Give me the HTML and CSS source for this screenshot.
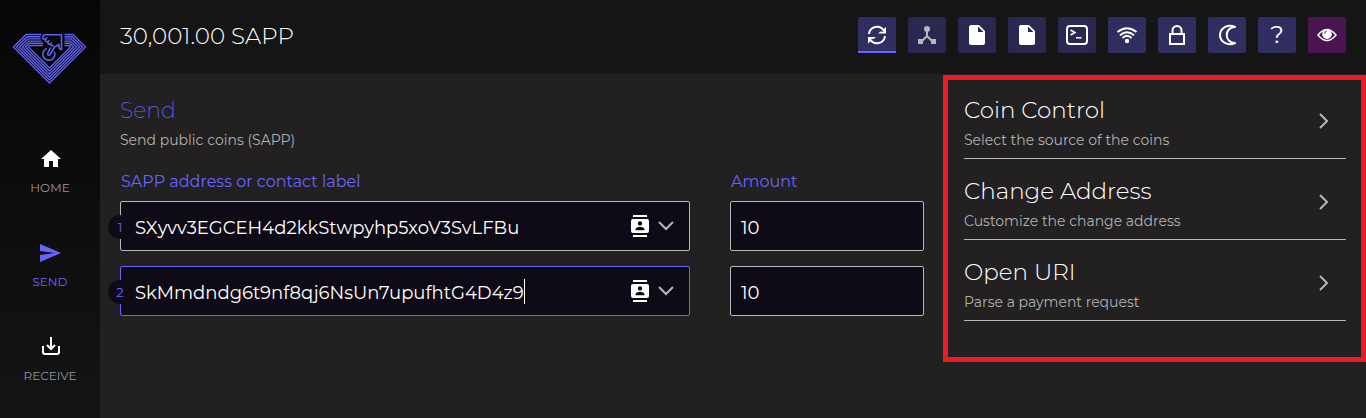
FILE: index.html
```html
<!DOCTYPE html>
<html lang="en">
<head>
<meta charset="utf-8">
<title>SAPP Wallet - Send</title>
<link rel="stylesheet" href="styles.css">
</head>
<body>
<svg class="defs" aria-hidden="true">
  <symbol id="file" viewBox="0 0 38 36"><path transform="translate(7 6)" fill="currentColor" d="M6 2c-1.1 0-2 .9-2 2v16c0 1.1.9 2 2 2h12c1.1 0 2-.9 2-2V8l-6-6H6zm7 7V3.500L18.500 9H13z"/></symbol>
  <symbol id="contacts" viewBox="0 0 18 22"><path fill="currentColor" fill-rule="evenodd" d="M2 0h14v2H2zM2 20h14v2H2zM2 4h14a2 2 0 0 1 2 2v10a2 2 0 0 1-2 2H2a2 2 0 0 1-2-2V6a2 2 0 0 1 2-2zM9 6.200a2.200 2.200 0 1 0 0 4.400 2.200 2.200 0 0 0 0-4.400zM4.500 15.200h9v-.8c0-1.700-2.500-2.600-4.500-2.600s-4.500.9-4.500 2.600z"/></symbol>
  <symbol id="down" viewBox="0 0 16 10"><path fill="none" stroke="currentColor" stroke-width="2" d="M1 1l7 7 7-7"/></symbol>
  <symbol id="right" viewBox="0 0 10 16"><path fill="none" stroke="currentColor" stroke-width="2" d="M1 1l7 7-7 7"/></symbol>
</svg>
<div class="app">
  <nav class="sidebar">
    <svg class="logo" viewBox="12 33 76 52" role="img" aria-label="Sapphire">
      <g class="logo-lines">
        <path d="M41.500 34.500H26L13.500 47 49.500 83 85.500 47 73 34.500h-8.500"/>
        <path d="M40.500 36.700H27L16.500 47l33 33 33-33L72 36.700h-7.500"/>
        <path d="M40.500 38.900H28L19.500 47l30 30 30-30-8.500-8.100h-6.500"/>
        <path d="M41.500 41.100H29L22.500 47l27 27 27-27-6.500-5.900h-5.500"/>
        <path d="M43 43.300H29.500l-4 3.700 24 24 24-24-4-3.700h-5"/>
        <path d="M43 45.500H30L28.500 47l21 21 21-21-1.500-1.500h-4.500"/>
      </g>
      <g class="logo-hand">
        <path d="M44 34.700h17.500V49.500c-2 .3-2.700-1.500-2.700-5-1.500.2-2.300 2-4.300 2.500l-4.300 7.500c-1 1.500-3 .5-2.600-1l3-6"/>
        <path d="M44.500 34.700c-2.500 1.500-2.500 4-.5 4.600 1 .2 1.300-.5 2-.8-1.500 2.500 0 4 2.500 2.700-1.500 2.500.3 4 2.500 2.500-.5 2 1 2.800 2.800 1.300"/>
        <path d="M47 48.500a6 6 0 1 0 7.200 3"/>
      </g>
    </svg>
    <a class="nav-item" href="#home"><svg viewBox="0 0 24 24"><path fill="currentColor" d="M11 20v-6h4v6h5v-8h3L13 3 3 12h3v8z"/></svg><span>HOME</span></a>
    <a class="nav-item active" href="#send"><svg viewBox="0 0 24 24"><path fill="currentColor" d="M2 21l21-9L2 3v7l15 2-15 2z"/></svg><span>SEND</span></a>
    <a class="nav-item" href="#receive"><svg viewBox="0 0 24 24"><path fill="none" stroke="currentColor" stroke-width="2" d="M5 11v6q0 2 2 2h12q2 0 2-2v-6M13 2v12M9 10l4 4 4-4"/></svg><span>RECEIVE</span></a>
  </nav>
  <div class="page">
    <header class="topbar">
      <div class="balance">30,001.00 SAPP</div>
      <div class="tools">
        <button class="tool sync" aria-label="Synchronize"><svg viewBox="0 0 38 36"><path fill="none" stroke="currentColor" stroke-width="2" d="M11 17a8 8 0 0 1 15-3M27 19a8 8 0 0 1-15 3"/><path fill="currentColor" d="M28 10v6.500h-8l2.500-2 3 .3 .5-3zM10 26.500V20h8l-2.500 2-3-.3-.5 3z"/></svg></button>
        <button class="tool muted" aria-label="Connection"><svg viewBox="0 0 38 36"><path fill="none" stroke="currentColor" stroke-width="2" d="M19 11v8l-6 6M19 19l6 6"/><circle cx="19" cy="12" r="3" fill="currentColor"/><path fill="currentColor" d="M10 22h5v5h-5zM23 22h5v5h-5z"/></svg></button>
        <button class="tool" aria-label="Configuration file"><svg><use href="#file"/></svg></button>
        <button class="tool" aria-label="Masternode file"><svg><use href="#file"/></svg></button>
        <button class="tool" aria-label="Console"><svg viewBox="0 0 38 36"><g fill="none" stroke="currentColor" stroke-width="2"><rect x="9" y="9" width="20" height="18" rx="3"/><path stroke-width="1.500" d="M12.500 13l4.500 2.500-4.500 2.500M18 20.700h5.500"/></g></svg></button>
        <button class="tool bright" aria-label="Network"><svg viewBox="0 0 38 36"><g fill="none" stroke="currentColor" stroke-width="2"><path d="M9.500 15q9.500-7.500 19 0M12 18.200q7-6 14 0M14.500 21q4.500-4.500 9 0"/></g><circle cx="19" cy="24" r="2.200" fill="currentColor"/></svg></button>
        <button class="tool bright" aria-label="Lock wallet"><svg viewBox="0 0 38 36"><path fill="none" stroke="currentColor" stroke-width="2" d="M12 17h14v10H12zM14.500 17v-3.500a4.500 4.500 0 0 1 9 0V17"/></svg></button>
        <button class="tool bright" aria-label="Theme"><svg viewBox="0 0 38 36"><path fill="none" stroke="currentColor" stroke-width="2" stroke-linejoin="round" d="M27 10c-7-3.500-15 1-15 8s8 11.500 15 8c-11 0-11-16 0-16z"/></svg></button>
        <button class="tool bright help" aria-label="Help">?</button>
        <button class="tool privacy" aria-label="Hide balance"><svg viewBox="0 0 38 36"><path fill="none" stroke="currentColor" stroke-width="1.500" d="M10 18q9-11 18 0-9 11-18 0z"/><circle cx="19" cy="17.200" r="4.800" fill="currentColor"/><path class="glint" d="M16.500 16.500q.3-2 2-2.300"/></svg></button>
      </div>
    </header>
    <main class="content">
      <form class="send">
        <h1>Send</h1>
        <p class="subtitle">Send public coins (SAPP)</p>
        <div class="fields">
          <label class="label" for="address1">SAPP address or contact label</label>
          <label class="label" for="amount1">Amount</label>
          <div class="field">
            <span class="badge">1</span>
            <input id="address1" class="address" value="SXyvv3EGCEH4d2kkStwpyhp5xoV3SvLFBu">
            <button type="button" class="pick" aria-label="Contacts"><svg class="contacts"><use href="#contacts"/></svg><svg class="down"><use href="#down"/></svg></button>
          </div>
          <input id="amount1" class="amount" value="10">
          <div class="field focused">
            <span class="badge">2</span>
            <input class="address" aria-label="Second address" value="SkMmdndg6t9nf8qj6NsUn7upufhtG4D4z9"><span class="caret"></span>
            <button type="button" class="pick" aria-label="Contacts"><svg class="contacts"><use href="#contacts"/></svg><svg class="down"><use href="#down"/></svg></button>
          </div>
          <input class="amount" aria-label="Second amount" value="10">
        </div>
      </form>
      <aside class="options">
        <button class="option"><span class="option-text"><span class="option-title">Coin Control</span><span class="subtitle">Select the source of the coins</span></span><svg class="right"><use href="#right"/></svg></button>
        <button class="option"><span class="option-text"><span class="option-title">Change Address</span><span class="subtitle">Customize the change address</span></span><svg class="right"><use href="#right"/></svg></button>
        <button class="option"><span class="option-text"><span class="option-title">Open URI</span><span class="subtitle">Parse a payment request</span></span><svg class="right"><use href="#right"/></svg></button>
      </aside>
    </main>
  </div>
</div>
</body>
</html>
```
FILE: styles.css
```css
* { box-sizing: border-box; }
body { margin: 0; background: #222021; color: #fff; font-family: Montserrat, Inter, sans-serif; font-weight: 300; }
button, input { font: inherit; color: inherit; border: 0; margin: 0; padding: 0; background: none; }
svg { display: block; }
.defs { display: none; }
.app { display: flex; min-height: 100vh; }

.sidebar { flex: 0 0 100px; display: flex; flex-direction: column; align-items: center; gap: 45px; padding-top: 33px; background: linear-gradient(#060606, #141414); }
.logo { width: 76px; height: 52px; margin-bottom: 17px; fill: none; stroke: #5f5fee; }
.logo-lines { stroke-width: 1.4; }
.logo-hand { stroke-width: 1.6; }
.nav-item { display: flex; flex-direction: column; align-items: center; gap: 9px; color: #fff; text-decoration: none; font-size: 12px; font-weight: 400; line-height: 16px; }
.nav-item svg { width: 24px; height: 24px; }
.nav-item span { color: #9896a6; }
.nav-item.active, .nav-item.active span { color: #6666ff; }

.page { flex: 1; min-width: 0; }
.topbar { display: flex; align-items: center; justify-content: space-between; padding: 17px 20px 21px; background: #151515; }
.balance { padding-top: 2px; font-size: 23px; line-height: 34px; }
.tools { display: flex; gap: 12px; }
.tool { width: 38px; height: 36px; border-radius: 2px; background: #2a2850; }
.tool svg { width: 38px; height: 36px; }
.tool.bright { background: #302d60; }
.tool.sync { background: #302d60; box-shadow: inset 0 -2px #6666ff; border-radius: 2px 2px 0 0; }
.tool.muted { color: #b7b6b8; }
.tool.help { font-size: 24px; font-weight: 400; line-height: 36px; }
.tool.privacy { background: #4a1450; }
.glint { fill: none; stroke: #4a1450; }

.content { display: grid; grid-template-columns: minmax(0, 1fr) 423px; align-items: start; gap: 19px; padding: 1px 0 0 20px; }
.send { padding-top: 21px; }
h1 { margin: 0 0 4px; color: #6666ff; font-size: 22px; font-weight: 200; line-height: 30px; }
.subtitle { display: block; margin: 0; color: #b1b0b2; font-size: 14px; font-weight: 400; line-height: 20px; }
.fields { display: grid; grid-template-columns: minmax(0, 1fr) 194px; gap: 15px 40px; padding-top: 21px; }
.label { margin-bottom: -7px; padding-left: 1px; color: #6666ff; font-size: 16px; font-weight: 400; line-height: 22px; }
.field, .amount { height: 50px; min-width: 0; width: 100%; border: 1px solid #b7b6b8; border-radius: 2px; background: #0f0b16; font-size: 18px; font-weight: 400; }
.field { position: relative; display: flex; align-items: center; padding: 0 15px 0 14px; }
.field.focused { border-color: #6666ff; }
.amount { padding: 3px 10px 0; }
.address { field-sizing: content; min-width: 0; padding-top: 3px; line-height: 24px; }
.caret { width: 1px; height: 25px; background: #fff; }
.badge { position: absolute; left: -13px; top: 13px; width: 24px; height: 24px; border-radius: 12px; background: #0f0b16; color: #6666ff; font-size: 13px; font-weight: 400; line-height: 24px; text-align: center; }
.pick { display: flex; align-items: center; gap: 9px; margin-left: auto; }
.contacts { width: 18px; height: 22px; }
.down { width: 16px; height: 10px; color: #b7b6b8; }

.options { display: flex; flex-direction: column; gap: 17px; padding: 15px 15px 36px 16px; border: 5px solid #ed1c24; }
.option { display: flex; justify-content: space-between; align-items: flex-start; padding-bottom: 8px; border-bottom: 1px solid #b7b6b8; text-align: left; }
.option-text { display: flex; flex-direction: column; gap: 5px; }
.option-title { font-size: 23px; line-height: 30px; }
.right { width: 10px; height: 16px; margin: 18px 17px 0 0; color: #b7b6b8; }
```
